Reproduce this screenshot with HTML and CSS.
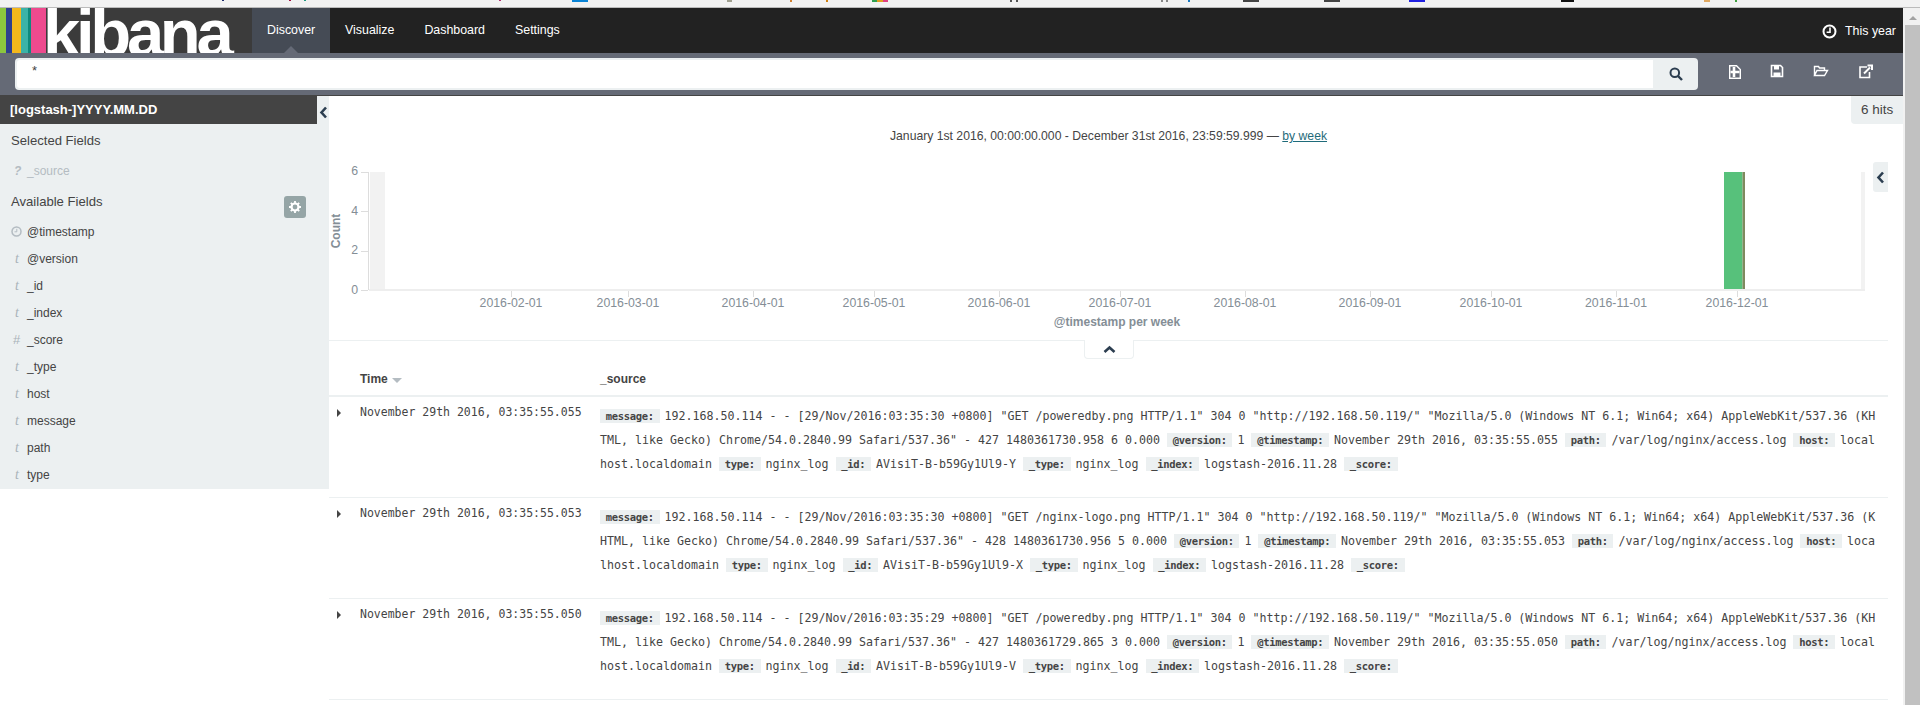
FILE: index.html
```html
<!DOCTYPE html>
<html lang="en">
<head>
<meta charset="utf-8">
<title>Discover - Kibana</title>
<link rel="stylesheet" href="styles.css">
</head>
<body>
<svg class="strip" width="1920" height="8" aria-hidden="true">
  <rect x="222" width="2" height="1" fill="#1b2a6b"/><rect x="289" width="2" height="1" fill="#a01040"/><rect x="304" width="2" height="1" fill="#1f9a80"/>
  <rect x="499" width="2" height="1" fill="#b03070"/><rect x="572" width="16" height="2" fill="#0a84d6"/><rect x="727" width="5" height="2" fill="#a0a090"/>
  <rect x="790" width="2" height="2" fill="#d08030"/><rect x="826" width="2" height="2" fill="#d08010"/><rect x="872" width="5" height="2" fill="#30a050"/>
  <rect x="877" width="6" height="2" fill="#e0a020"/><rect x="883" width="5" height="2" fill="#e04080"/><rect x="1010" width="2" height="2" fill="#555"/>
  <rect x="1016" width="2" height="2" fill="#555"/><rect x="1161" width="2" height="2" fill="#888"/><rect x="1166" width="2" height="2" fill="#888"/>
  <rect x="1188" width="2" height="2" fill="#1878c0"/><rect x="1243" width="16" height="2" fill="#444"/><rect x="1324" width="16" height="2" fill="#444"/>
  <rect x="1409" width="16" height="2" fill="#2020e0"/><rect x="1561" width="13" height="2" fill="#111"/><rect x="1704" width="6" height="2" fill="#e0a860"/>
  <rect x="1735" width="2" height="2" fill="#40a040"/>
</svg>
<div class="app">
  <div class="main">
    <nav class="nav">
      <div class="logo">
        <div class="stripes"><i class="s1"></i><i class="s2"></i><i class="s3"></i><i class="s4"></i><i class="s5"></i><i class="s6"></i></div>
        <span class="wordmark">kibana</span>
      </div>
      <a class="tab active">Discover</a>
      <a class="tab">Visualize</a>
      <a class="tab">Dashboard</a>
      <a class="tab">Settings</a>
      <div class="timepick">
        <svg class="clock" width="15" height="15" viewBox="0 0 15 15"><circle cx="7.5" cy="7.5" r="6" fill="none" stroke="#fff" stroke-width="2"/><path d="M8 3.5V8.2H4.6" fill="none" stroke="#fff" stroke-width="1.6"/></svg>
        <span>This year</span>
      </div>
    </nav>
    <div class="searchbar">
      <div class="query">
        <div class="query-input">*</div>
        <div class="query-btn">
          <svg width="14" height="14" viewBox="0 0 14 14"><circle cx="5.8" cy="5.8" r="4.3" fill="none" stroke="#2c3e50" stroke-width="2"/><path d="M9 9l4 4" stroke="#2c3e50" stroke-width="2.4"/></svg>
        </div>
      </div>
      <div class="actions">
        <svg class="act-new" width="14" height="16" viewBox="0 0 14 16"><path d="M1.700 1.700h6.800l3.800 3.800v8.800H1.700z" fill="none" stroke="#fff" stroke-width="1.400"/><path d="M6 3v10M2.500 8h9" stroke="#fff" stroke-width="2.600"/></svg>
        <svg class="act" width="14" height="14" viewBox="0 0 14 14"><path d="M1.500 1.500h9l2 2v9h-11z" fill="none" stroke="#fff" stroke-width="1.600"/><path d="M4 2h5v3.500H4zM3.500 8.500h7V12h-7z" fill="#fff"/></svg>
        <svg class="act" width="16" height="14" viewBox="0 0 16 14"><path d="M1.500 11.500V2.500h4l1 1.500h5v2.500M1.500 11.500l2.500-5h10.500l-3 5z" fill="none" stroke="#fff" stroke-width="1.400"/></svg>
        <svg class="act" width="15" height="15" viewBox="0 0 15 15"><path d="M9 3H2v10.500h9.500V8" fill="none" stroke="#fff" stroke-width="1.600"/><path d="M6 9.500L12 3.500M9.500 1.500h4.500V6" fill="none" stroke="#fff" stroke-width="2"/></svg>
      </div>
    </div>
    <div class="body">
      <aside class="sidebar">
        <div class="index-title">[logstash-]YYYY.MM.DD</div>
        <svg class="side-toggle" width="9" height="13" viewBox="0 0 9 13"><path d="M7 1.500L2.500 6.500 7 11.500" fill="none" stroke="#2c3e50" stroke-width="2.600"/></svg>
        <h5 class="side-head first">Selected Fields</h5>
        <ul class="fields selected">
          <li class="field dim"><i class="ty">?</i>_source</li>
        </ul>
        <div class="avail">
          <h5 class="side-head">Available Fields</h5>
          <div class="gear">
            <svg width="12" height="12" viewBox="0 0 12 12"><circle cx="6" cy="6" r="3.500" fill="none" stroke="#fff" stroke-width="2.200"/><path d="M6 0v2.500M6 9.500V12M0 6h2.500M9.500 6H12M1.800 1.800l1.800 1.800M8.400 8.400l1.800 1.800M1.800 10.200l1.800-1.800M8.400 3.600l1.800-1.800" stroke="#fff" stroke-width="1.800"/></svg>
          </div>
        </div>
        <ul class="fields">
          <li class="field"><svg class="ty-clock" width="11" height="11" viewBox="0 0 11 11"><circle cx="5.500" cy="5.500" r="4.500" fill="none" stroke="#b4bcc2" stroke-width="1.500"/><path d="M5.800 2.800v3H3.500" fill="none" stroke="#b4bcc2"/></svg>@timestamp</li>
          <li class="field"><i class="ty">t</i>@version</li>
          <li class="field"><i class="ty">t</i>_id</li>
          <li class="field"><i class="ty">t</i>_index</li>
          <li class="field"><i class="ty num">#</i>_score</li>
          <li class="field"><i class="ty">t</i>_type</li>
          <li class="field"><i class="ty">t</i>host</li>
          <li class="field"><i class="ty">t</i>message</li>
          <li class="field"><i class="ty">t</i>path</li>
          <li class="field"><i class="ty">t</i>type</li>
        </ul>
      </aside>
      <main class="content">
        <div class="hits">6 hits</div>
        <div class="interval">January 1st 2016, 00:00:00.000 - December 31st 2016, 23:59:59.999 — <a class="by">by week</a></div>
        <div class="chart-tab">
          <svg width="9" height="13" viewBox="0 0 9 13"><path d="M7 1.500L2.500 6.500 7 11.500" fill="none" stroke="#2c3e50" stroke-width="2.600"/></svg>
        </div>
        <svg class="chart" width="1559" height="190" viewBox="0 0 1559 190">
          <rect class="band" x="41" y="22" width="15" height="118"/>
          <rect class="band" x="1532" y="22" width="4" height="118"/>
          <rect x="1395" y="22" width="18.500" height="118" fill="#57c17b"/>
          <rect x="1413.500" y="22" width="2.500" height="118" fill="#7f8a5f"/>
          <path class="axis" d="M39.500 22V140M32 22.500h7M32 61.500h7M32 101.500h7M32 140.500h7"/>
          <path class="axis" d="M182.500 141v6M299.500 141v6M424.500 141v6M545.500 141v6M670.500 141v6M791.500 141v6M916.500 141v6M1041.500 141v6M1162.500 141v6M1287.500 141v6M1408.500 141v6"/>
          <rect class="band-x" x="40" y="139" width="1496" height="2"/>
          <text class="tick end" x="29" y="25">6</text>
          <text class="tick end" x="29" y="65">4</text>
          <text class="tick end" x="29" y="104">2</text>
          <text class="tick end" x="29" y="144">0</text>
          <text class="ctitle mid" transform="translate(11 81) rotate(-90)">Count</text>
          <text class="tick mid" x="182" y="157">2016-02-01</text>
          <text class="tick mid" x="299" y="157">2016-03-01</text>
          <text class="tick mid" x="424" y="157">2016-04-01</text>
          <text class="tick mid" x="545" y="157">2016-05-01</text>
          <text class="tick mid" x="670" y="157">2016-06-01</text>
          <text class="tick mid" x="791" y="157">2016-07-01</text>
          <text class="tick mid" x="916" y="157">2016-08-01</text>
          <text class="tick mid" x="1041" y="157">2016-09-01</text>
          <text class="tick mid" x="1162" y="157">2016-10-01</text>
          <text class="tick mid" x="1287" y="157">2016-11-01</text>
          <text class="tick mid" x="1408" y="157">2016-12-01</text>
          <text class="ctitle mid" x="788" y="176">@timestamp per week</text>
        </svg>
        <div class="divider">
          <div class="collapse">
            <svg width="13" height="9" viewBox="0 0 13 9"><path d="M1.500 7L6.500 2.500 11.500 7" fill="none" stroke="#2c3e50" stroke-width="2.600"/></svg>
          </div>
        </div>
        <div class="thead">
          <div class="th th-time">Time<i class="sort"></i></div>
          <div class="th">_source</div>
        </div>
        <div class="row">
          <i class="expand"></i>
          <div class="time">November 29th 2016, 03:35:55.055</div>
          <div class="src"><span class="k">message:</span>192.168.50.114 - - [29/Nov/2016:03:35:30 +0800] "GET /poweredby.png HTTP/1.1" 304 0 "http://192.168.50.119/" "Mozilla/5.0 (Windows NT 6.1; Win64; x64) AppleWebKit/537.36 (KHTML, like Gecko) Chrome/54.0.2840.99 Safari/537.36" - 427 1480361730.958 6 0.000 <span class="k">@version:</span>1 <span class="k">@timestamp:</span>November 29th 2016, 03:35:55.055 <span class="k">path:</span>/var/log/nginx/access.log <span class="k">host:</span>localhost.localdomain <span class="k">type:</span>nginx_log <span class="k">_id:</span>AVisiT-B-b59Gy1Ul9-Y <span class="k">_type:</span>nginx_log <span class="k">_index:</span>logstash-2016.11.28 <span class="k">_score:</span></div>
        </div>
        <div class="row">
          <i class="expand"></i>
          <div class="time">November 29th 2016, 03:35:55.053</div>
          <div class="src"><span class="k">message:</span>192.168.50.114 - - [29/Nov/2016:03:35:30 +0800] "GET /nginx-logo.png HTTP/1.1" 304 0 "http://192.168.50.119/" "Mozilla/5.0 (Windows NT 6.1; Win64; x64) AppleWebKit/537.36 (KHTML, like Gecko) Chrome/54.0.2840.99 Safari/537.36" - 428 1480361730.956 5 0.000 <span class="k">@version:</span>1 <span class="k">@timestamp:</span>November 29th 2016, 03:35:55.053 <span class="k">path:</span>/var/log/nginx/access.log <span class="k">host:</span>localhost.localdomain <span class="k">type:</span>nginx_log <span class="k">_id:</span>AVisiT-B-b59Gy1Ul9-X <span class="k">_type:</span>nginx_log <span class="k">_index:</span>logstash-2016.11.28 <span class="k">_score:</span></div>
        </div>
        <div class="row">
          <i class="expand"></i>
          <div class="time">November 29th 2016, 03:35:55.050</div>
          <div class="src"><span class="k">message:</span>192.168.50.114 - - [29/Nov/2016:03:35:29 +0800] "GET /poweredby.png HTTP/1.1" 304 0 "http://192.168.50.119/" "Mozilla/5.0 (Windows NT 6.1; Win64; x64) AppleWebKit/537.36 (KHTML, like Gecko) Chrome/54.0.2840.99 Safari/537.36" - 427 1480361729.865 3 0.000 <span class="k">@version:</span>1 <span class="k">@timestamp:</span>November 29th 2016, 03:35:55.050 <span class="k">path:</span>/var/log/nginx/access.log <span class="k">host:</span>localhost.localdomain <span class="k">type:</span>nginx_log <span class="k">_id:</span>AVisiT-B-b59Gy1Ul9-V <span class="k">_type:</span>nginx_log <span class="k">_index:</span>logstash-2016.11.28 <span class="k">_score:</span></div>
        </div>
      </main>
    </div>
  </div>
  <div class="scrollbar">
    <div class="sb-up"></div>
    <div class="sb-thumb"></div>
  </div>
</div>
</body>
</html>
```
FILE: styles.css
```css
* { box-sizing: border-box; }
html, body { margin: 0; padding: 0; height: 705px; overflow: hidden; background: #fff; }
body { font-family: "Liberation Sans", Arial, sans-serif; font-size: 12px; color: #444; }
h5, ul { margin: 0; padding: 0; list-style: none; font-weight: normal; }
svg { display: block; }

.strip { background: #f2f2f2; border-bottom: 1px solid #bbb; }
.app { display: flex; height: 697px; }
.main { width: 1903px; display: flex; flex-direction: column; }

.nav { height: 45px; display: flex; background: #222; color: #fff; }
.logo { width: 252px; display: flex; background: #3b3b3b; overflow: hidden; }
.stripes { display: flex; width: 46px; flex: none; margin-right: -3px; }
.stripes i { display: block; height: 100%; }
.s1 { width: 6px; background: #8cc63f; }
.s2 { width: 6px; background: #2e3f8f; }
.s3 { width: 9px; background: #f4b81c; }
.s4 { width: 7px; background: #3bb3a8; }
.s5 { width: 3px; background: #0f8a7e; }
.s6 { width: 15px; background: #ee4a8e; }
.wordmark { font-size: 67px; font-weight: bold; line-height: 45px; padding-top: 2px; color: #fff; letter-spacing: -4.300px; }
.tab { padding: 0 15px; line-height: 45px; font-size: 12.400px; position: relative; }
.tab.active { background: #454b55; width: 78px; }
.tab.active::after { content: ""; position: absolute; left: 32px; bottom: 0; border: 7px solid transparent; border-top: 0; border-bottom-color: #656a76; }
.timepick { margin-left: auto; display: flex; align-items: center; gap: 8px; padding-right: 7px; font-size: 12.400px; }
.clock { margin-top: 2px; }

.searchbar { height: 43px; padding: 5px 0 0 15px; display: flex; background: #656a76; border-bottom: 1px solid #444; }
.query { width: 1683px; height: 32px; display: flex; background: #ecf0f1; border-radius: 4px; padding: 2px 0 2px 2px; }
.query-input { flex: 1; background: #fff; padding: 3px 0 0 15px; font-size: 13px; color: #444; border-radius: 3px 0 0 3px; }
.query-btn { width: 45px; display: flex; align-items: center; justify-content: center; }
.actions { flex: 1; display: flex; align-items: flex-start; gap: 29px; padding: 5px 0 0 30px; }
.actions svg { margin-top: 1px; }
.act-new { margin-right: -1px; }

.body { flex: 1; display: flex; min-height: 0; }
.sidebar { width: 329px; flex: none; height: 393px; background: #ecf0f1; position: relative; }
.index-title { width: 317px; height: 28px; background: #444; color: #fff; font-size: 13px; font-weight: bold; line-height: 28px; padding-left: 10px; }
.side-toggle { position: absolute; left: 319px; top: 10px; }
.side-head { font-size: 13.100px; line-height: 20px; padding-left: 11px; }
.side-head.first { margin-top: 7px; }
.avail { display: flex; justify-content: space-between; height: 22px; padding-right: 23px; margin-top: 16px; }
.avail .side-head { margin-top: -4px; }
.gear { width: 22px; height: 22px; background: #95a5a6; border-radius: 3px; display: flex; align-items: center; justify-content: center; }
.fields.selected { padding-top: 10px; height: 29px; }
.field { display: flex; align-items: center; height: 27px; font-size: 12px; color: #444; }
.field.dim { height: 20px; color: #b4bcc2; }
.ty { width: 27px; padding-left: 15px; font: italic 14px "Liberation Serif", serif; color: #a9b3b9; }
.ty.num { font: normal 13px "Liberation Sans", sans-serif; padding-left: 13px; }
.dim .ty { font: italic bold 12px "Liberation Sans", sans-serif; padding-left: 14px; color: #b4bcc2; }
.ty-clock { margin: 0 5px 0 11px; }

.content { flex: 1; min-width: 0; padding-right: 15px; position: relative; }
.hits { position: absolute; top: 0; right: 0; width: 52px; height: 28px; padding-left: 10px; background: #ecf0f1; border-bottom-left-radius: 4px; font-size: 13.500px; line-height: 28px; }
.interval { height: 54px; padding-top: 30px; text-align: center; line-height: 20px; font-size: 12.200px; color: #444; }
.by { color: #1f6b7a; text-decoration: underline; }
.chart-tab { position: absolute; right: 15px; top: 66px; width: 15px; height: 30px; background: #ecf0f1; border-radius: 3px 0 0 3px; display: flex; align-items: center; justify-content: center; }
.chart { font-family: "Liberation Sans", Arial, sans-serif; }
.band { fill: #f2f2f2; }
.band-x { fill: #eee; }
.axis { stroke: #ddd; fill: none; }
.tick { font-size: 12.300px; fill: #848e96; }
.ctitle { font-size: 12px; font-weight: bold; fill: #848e96; }
.end { text-anchor: end; }
.mid { text-anchor: middle; }

.divider { height: 55px; border-top: 1px solid #ecf0f1; position: relative; }
.collapse { position: absolute; left: 755px; top: -1px; width: 50px; height: 19px; background: #fff; border: 1px solid #ecf0f1; border-top: 0; border-radius: 0 0 4px 4px; display: flex; align-items: center; justify-content: center; }
.thead { height: 2px; border-top: 2px solid #ecf0f1; position: relative; }
.th { position: absolute; left: 271px; top: -28px; font-weight: bold; font-size: 12px; line-height: 20px; color: #444; }
.th-time { left: 31px; display: flex; align-items: center; gap: 4px; }
.sort { width: 0; height: 0; margin-top: 3px; border: 5px solid transparent; border-top: 5px solid #b4bcc2; border-bottom: 0; }

.row { height: 101px; display: flex; border-bottom: 1px solid #ecf0f1; font-family: "DejaVu Sans Mono", monospace; font-size: 11.630px; color: #444; }
.expand { width: 0; height: 0; flex: none; margin: 12px 20px 0 8px; border: 4px solid transparent; border-left: 4px solid #444; border-right: 0; }
.time { width: 240px; flex: none; font-size: 11.500px; line-height: 20px; padding-top: 5px; margin-left: -1px; }
.src { width: 1280px; flex: none; line-height: 24px; padding-top: 7px; word-break: break-all; }
.k { background: #ecf0f1; font-weight: bold; font-size: 10.500px; letter-spacing: -0.320px; padding: 1px 5.750px; margin-right: 5px; }

.scrollbar { width: 17px; background: #f1f1f1; display: flex; flex-direction: column; align-items: flex-end; }
.sb-up { width: 15px; height: 17px; flex: none; position: relative; }
.sb-up::after { content: ""; position: absolute; left: 4px; top: 8px; border: 4px solid transparent; border-top: 0; border-bottom: 4px solid #a3a3a3; }
.sb-thumb { width: 15px; flex: 1; background: #c1c1c1; }
```
